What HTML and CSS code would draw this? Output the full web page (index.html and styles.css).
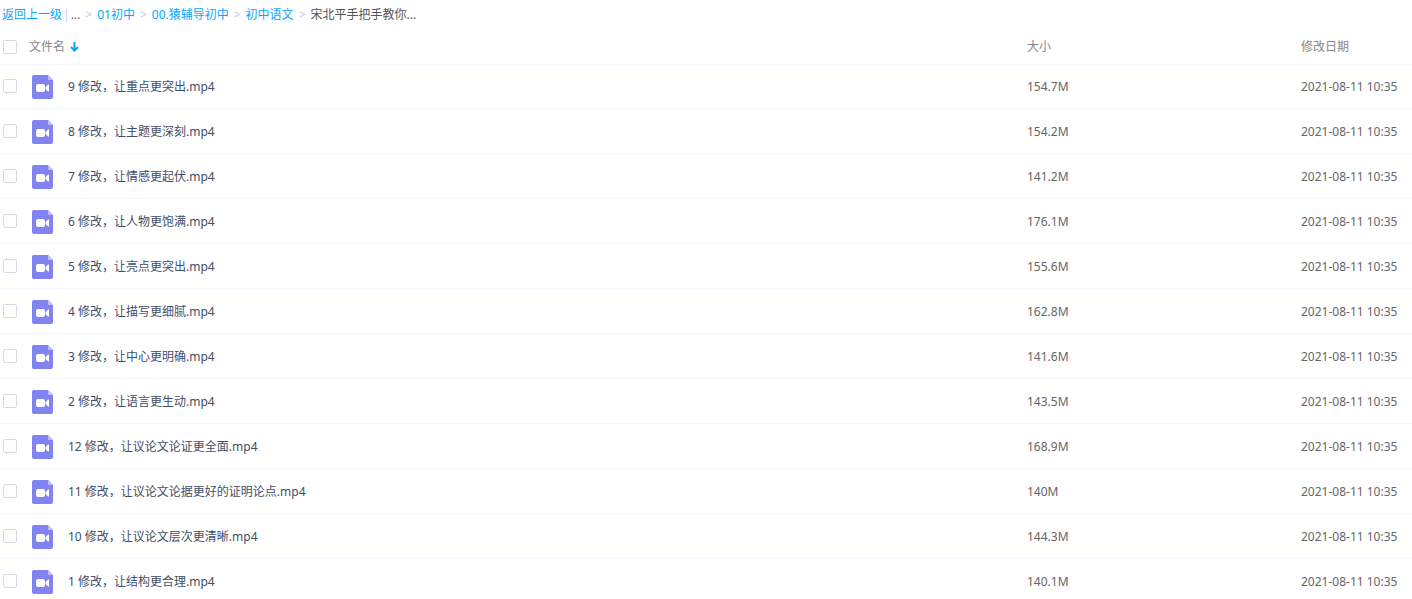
FILE: index.html
```html
<!DOCTYPE html>
<html lang="zh-CN">
<head>
<meta charset="utf-8">
<title>宋北平手把手教你</title>
<link rel="stylesheet" href="styles.css">
</head>
<body>
<svg class="defs" width="0" height="0" aria-hidden="true">
  <symbol id="video" viewBox="0 0 21 24">
    <path d="M2 0H16L21 5V22a2 2 0 0 1-2 2H2a2 2 0 0 1-2-2V2a2 2 0 0 1 2-2Z" fill="#8183f1"/>
    <path d="M16 0L21 5H17a1 1 0 0 1-1-1Z" fill="#bfc0fa"/>
    <rect x="4" y="9" width="9" height="8" rx="2" fill="#fff"/>
    <path d="M13.400 12.400L16 9.500H17V16.500H16L13.400 13.800Z" fill="#fff"/>
  </symbol>
</svg>
<nav class="crumbs" aria-label="路径">
  <a href="#">返回上一级</a><span class="bar">|</span><span class="dots">...</span><span class="sep">&gt;</span><a href="#">01初中</a><span class="sep">&gt;</span><a href="#">00.猿辅导初中</a><span class="sep">&gt;</span><a href="#">初中语文</a><span class="sep">&gt;</span><span class="current">宋北平手把手教你...</span>
</nav>
<table class="files">
  <thead>
    <tr>
      <th class="name"><div class="cell"><input class="check" type="checkbox" aria-label="全选"><button class="sort" type="button">文件名<svg class="arrow" viewBox="0 0 9 10" aria-hidden="true"><path d="M4.500 0V8M1 5L4.500 8.500L8 5" fill="none" stroke="#06a7ff" stroke-width="2"/></svg></button></div></th>
      <th class="size">大小</th>
      <th class="date">修改日期</th>
    </tr>
  </thead>
  <tbody id="rows"></tbody>
</table>
<script src="files.js"></script>
</body>
</html>
```
FILE: files.js
```js
const files = [
  ["9 修改，让重点更突出.mp4", "154.7M"],
  ["8 修改，让主题更深刻.mp4", "154.2M"],
  ["7 修改，让情感更起伏.mp4", "141.2M"],
  ["6 修改，让人物更饱满.mp4", "176.1M"],
  ["5 修改，让亮点更突出.mp4", "155.6M"],
  ["4 修改，让描写更细腻.mp4", "162.8M"],
  ["3 修改，让中心更明确.mp4", "141.6M"],
  ["2 修改，让语言更生动.mp4", "143.5M"],
  ["12 修改，让议论文论证更全面.mp4", "168.9M"],
  ["11 修改，让议论文论据更好的证明论点.mp4", "140M"],
  ["10 修改，让议论文层次更清晰.mp4", "144.3M"],
  ["1 修改，让结构更合理.mp4", "140.1M"]
];

document.getElementById("rows").innerHTML = files.map(([name, size], i) => `
  <tr>
    <td class="name"><div class="cell">
      <input class="check" type="checkbox" id="file${i}">
      <svg class="icon" aria-hidden="true"><use href="#video"/></svg>
      <label for="file${i}">${name}</label>
    </div></td>
    <td class="size">${size}</td>
    <td class="date">2021-08-11 10:35</td>
  </tr>`).join("");
```
FILE: styles.css
```css
* {
  box-sizing: border-box;
}

body {
  margin: 0;
  overflow: hidden;
  background: #fff;
  color: #666;
  font: 12px/18px "Noto Sans", "Noto Sans CJK SC", sans-serif;
}

.defs {
  position: absolute;
}

.crumbs {
  display: flex;
  padding: 6px 2px;
  white-space: nowrap;
}

.crumbs a {
  color: #06a7ff;
  text-decoration: none;
}

.bar {
  margin: 0 1px;
  color: #b4cdf0;
}

.sep {
  margin: 0 5px;
  color: #b4cdf0;
}

.current {
  color: #555;
}

.files {
  width: 100%;
  border-collapse: separate;
  border-spacing: 0;
  table-layout: fixed;
}

.files th,
.files td {
  height: 45px;
  padding: 2px 0 0;
  border-bottom: 1px solid #f1f5fe;
  text-align: left;
  font-weight: 400;
  white-space: nowrap;
}

.files th {
  height: 35px;
  padding: 0;
  color: #888;
}

.files tbody tr:first-child td {
  height: 44px;
  padding: 0;
}

.files th.size {
  width: 274px;
}

.files th.date {
  width: 111px;
}

.cell {
  display: flex;
  align-items: center;
  padding-left: 3px;
}

.check {
  appearance: none;
  width: 14px;
  height: 14px;
  margin: 0;
  border: 1px solid #d4d9e6;
  border-radius: 2px;
  background: #fff;
}

tbody .check {
  margin-bottom: 2px;
}

.check:checked {
  border-color: #06a7ff;
  background: #06a7ff;
}

.icon {
  width: 21px;
  height: 24px;
  margin: 0 15px;
}

.files label {
  color: #424e67;
}

.sort {
  display: flex;
  align-items: center;
  gap: 5px;
  margin-left: 12px;
  padding: 0;
  border: 0;
  background: none;
  color: inherit;
  font: inherit;
}

.arrow {
  width: 9px;
  height: 10px;
}
```
